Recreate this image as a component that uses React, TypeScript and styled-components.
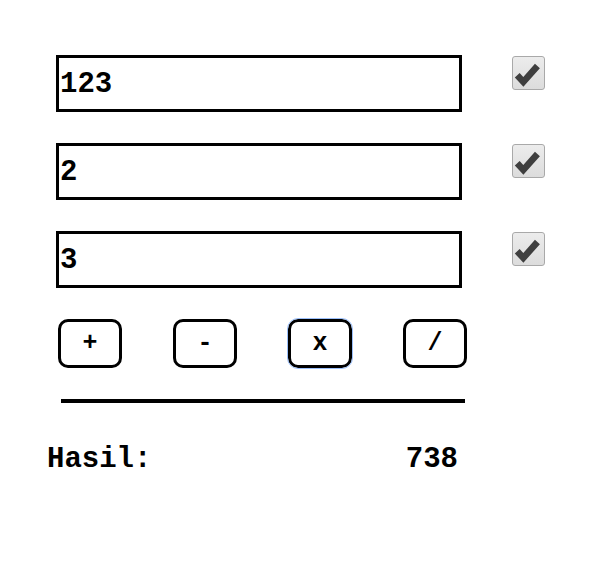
import React from "react";
import styled, { createGlobalStyle } from "styled-components";

const Global = createGlobalStyle`
  html, body { margin: 0; padding: 0; background: #fff; }
  body { font-family: "Liberation Mono", "Courier New", monospace; }
`;

const Page = styled.div`
  width: 593px;
  height: 562px;
  padding-top: 55px;
  box-sizing: border-box;
  display: flex;
  flex-direction: column;
`;

const Row = styled.div`
  display: flex;
  align-items: flex-start;
  margin-left: 56px;
  margin-bottom: 31px;
  gap: 50px;
`;

const Field = styled.div`
  width: 406px;
  height: 57px;
  box-sizing: border-box;
  border: 3px solid #000;
  display: flex;
  align-items: center;
  padding-left: 1px;
  padding-top: 2px;
  font-family: "Liberation Mono", "Courier New", monospace;
  font-weight: bold;
  font-size: 29px;
  color: #000;
`;

const CheckBox = styled.div`
  margin-top: 1px;
  width: 33px;
  height: 34px;
  box-sizing: border-box;
  border: 1px solid #a9a9a9;
  border-radius: 3px;
  background: linear-gradient(#ececec, #dcdcdc);
  display: flex;
  align-items: center;
  justify-content: center;
`;

const Buttons = styled.div`
  display: flex;
  gap: 51px;
  margin-left: 58px;
`;

const OpButton = styled.div<{ $focused?: boolean }>`
  width: 64px;
  height: 49px;
  box-sizing: border-box;
  border: 3px solid #000;
  border-radius: 10px;
  display: flex;
  align-items: center;
  justify-content: center;
  font-family: "Liberation Mono", "Courier New", monospace;
  font-weight: bold;
  font-size: 25px;
  color: #000;
  outline: ${(p) => (p.$focused ? "1px solid #9cc0fb" : "none")};
  outline-offset: 0px;
`;

const Divider = styled.div`
  margin-left: 61px;
  margin-top: 31px;
  width: 404px;
  height: 4px;
  background: #000;
`;

const Result = styled.div`
  display: flex;
  justify-content: space-between;
  width: 411px;
  margin-left: 47px;
  margin-top: 40px;
  font-family: "Liberation Mono", "Courier New", monospace;
  font-weight: bold;
  font-size: 29px;
  line-height: 34px;
  color: #000;
`;

const Check = () => (
  <svg width="33" height="34" viewBox="0 0 33 34">
    <path
      d="M5.5 19 L12 26 L27 9"
      fill="none"
      stroke="#3f3f3f"
      strokeWidth="7"
      strokeLinejoin="miter"
      strokeLinecap="butt"
      transform="translate(-1 0.5)"
    />
  </svg>
);

const values = ["123", "2", "3"];
const ops = ["+", "-", "x", "/"];

export default function App() {
  return (
    <>
      <Global />
      <Page>
        {values.map((v) => (
          <Row key={v}>
            <Field>{v}</Field>
            <CheckBox>
              <Check />
            </CheckBox>
          </Row>
        ))}
        <Buttons>
          {ops.map((o) => (
            <OpButton key={o} $focused={o === "x"}>
              {o}
            </OpButton>
          ))}
        </Buttons>
        <Divider />
        <Result>
          <span>Hasil:</span>
          <span>738</span>
        </Result>
      </Page>
    </>
  );
}
